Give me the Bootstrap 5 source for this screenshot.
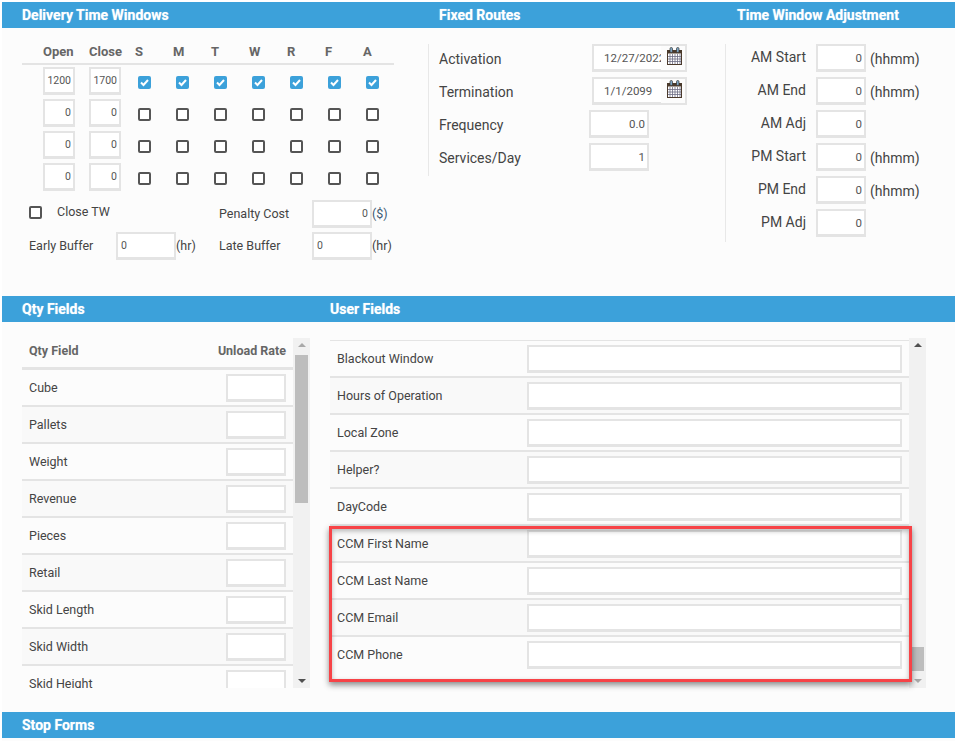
<!DOCTYPE html>
<html lang="en">
<head>
<meta charset="utf-8">
<title>Delivery settings</title>
<link href="https://cdn.jsdelivr.net/npm/bootstrap@5.3.0/dist/css/bootstrap.min.css" rel="stylesheet">
<style>
html,body{height:100%;}
body{background:#fff;font-family:Roboto,"Liberation Sans",sans-serif;font-size:12.5px;color:#444;overflow:hidden;}
.pg{margin:2px 0 0 2px;width:953px;height:739px;background:#fcfcfc;}
.band{height:26px;background:#3ca1da;color:#fff;font-weight:700;font-size:14px;line-height:26px;text-shadow:0 0 1px rgba(255,255,255,.6);}
.band-a{padding-left:20px;width:437px;}
.band-b{width:298px;}
.band-q{padding-left:20px;width:328px;}
.top{height:268px;}
.c-dtw{width:426px;padding:12px 0 0 20px;}
.tw-row{width:372px;height:32px;}
.tw-head{height:25px;border-bottom:2px solid #e4e4e4;font-weight:700;color:#666;font-size:13px;}
.form-control.o-c{margin-left:21px;width:32px;flex:none;}
.form-control.c-c{margin-left:14px;width:32px;flex:none;}
.tw-head .o-c{margin-left:21px;width:32px;flex:none;}
.tw-head .c-c{margin-left:14px;width:32px;flex:none;}
.d-c{width:38px;padding-left:3px;flex:none;}
.d-first{margin-left:14px;}
.d-c .form-check-input{margin-top:2px;}
.tw-head .d-c{padding-left:0;}
.form-check-input.ck{width:13px;height:13px;border:2px solid #555;border-radius:2px;background-color:#fff;box-shadow:none;display:block;}
.form-check-input.ck:checked{border:0;background-color:#3ca1da;background-size:100% 100%;background-image:url("data:image/svg+xml,%3csvg xmlns='http://www.w3.org/2000/svg' viewBox='0 0 13 13'%3e%3cpath fill='none' stroke='%23fff' stroke-width='2' d='M3 6.5l2.5 2.5 4.5-5'/%3e%3c/svg%3e");}
.form-control.fld{height:28px;min-height:0;padding:0 2px;border:2px solid #e4e4e4;border-bottom-width:3px;border-radius:0;background:#fff;font-size:10.5px;color:#555;text-align:right;box-shadow:none;}
.form-control.fld-l{text-align:left;padding-left:3px;}
.w50{width:50px;flex:none;}
.form-control.w60{width:60px;flex:none;}
.form-control.w375{width:375px;flex:none;}
.form-control.lg-t{font-size:11.5px;}
.tw-foot{padding-left:7px;width:372px;}
.ft1{height:28px;margin-top:7px;}
.ft2{height:28px;margin-top:4px;}
.lab-a{width:190px;padding-bottom:3px;}
.lab-a span{margin-left:15px;}
.lab-b{width:93px;}
.lab-c{width:87px;}
.lab-e{width:43px;}
.unit{color:#444;white-space:nowrap;}
.unit-d{color:#3d5a73;}
.c-fix{width:297px;margin-top:16px;height:132px;border-left:1px solid #e8e8e8;padding-left:10px;font-size:14px;}
.c-adj{margin-top:16px;height:198px;border-left:1px solid #e8e8e8;font-size:14px;}
.r33{height:28px;margin-bottom:5px;}
.r33:last-child{margin-bottom:0;}
.lab-f{width:150px;padding-top:2px;}
.lab-g{width:153px;padding-top:2px;}
.dt-grp{width:95px;flex:none;}
.dt-grp .form-control.fld{width:69px;flex:none;text-align:left;padding:0 0 0 10px;border-right:0;font-size:11.5px;}
.dt-add{width:26px;height:28px;flex:none;border:2px solid #e4e4e4;border-left:0;background:#fcfcfc;}
.lab-r{width:80px;text-align:right;margin-right:10px;padding-bottom:2px;}
.c-un{margin-left:4px;padding-top:2px;}
.bot{padding:16px 0 0 20px;height:390px;}
.view{height:350px;position:relative;}
.v-q{width:288px;}
.v-u{width:596px;margin-left:20px;}
.clip{height:350px;overflow:hidden;flex:1 1 auto;min-width:0;}
.trk{width:17px;height:350px;background:#f1f1f1;flex:none;padding:0 2px;}
.arr-u,.arr-d{width:0;height:0;border-left:4px solid transparent;border-right:4px solid transparent;margin:5px auto 0;}
.arr-u{border-bottom:4px solid #505050;}
.arr-d{border-top:4px solid #505050;margin:0 auto 5px;}
.arr-fade{border-bottom-color:#a9a9a9;}
.arr-fade-d{border-top-color:#a9a9a9;}
.thm{width:13px;background:#bdbdbd;}
.thm-q{height:148px;margin-top:8px;}
.thm-gap1{flex:1 1 auto;}
.thm-u{height:24px;margin-bottom:8px;}
.q-head{height:32px;border-bottom:3px solid #e4e4e4;padding:0 7px 2px;font-weight:700;color:#666;font-size:12.5px;}
.q-row{height:37px;border-bottom:2px solid #e4e4e4;padding:0 7px;flex:none;}
.q-row span{padding-top:2px;}
.q-list .q-row:nth-child(even){background:#f9f9f9;}
.u-list{margin-top:2px;border-top:1px solid #e4e4e4;}
.u-list .q-row:last-child{border-bottom-color:transparent;}
.red-box{position:absolute;left:-1px;top:188px;width:583px;height:156px;border:3px solid #f74347;box-shadow:0 3px 6px rgba(0,0,0,.45),inset 0 2px 5px rgba(0,0,0,.28);pointer-events:none;}
.cal{display:block;margin:1px 0 0 6px;}
</style>
</head>
<body>
<div class="pg">
  <div class="band d-flex"><div class="band-a">Delivery Time Windows</div><div class="band-b">Fixed Routes</div><div>Time Window Adjustment</div></div>
  <div class="top d-flex">
    <div class="c-dtw">
      <div class="tw-row tw-head d-flex align-items-center">
        <div class="o-c">Open</div><div class="c-c">Close</div>
        <div class="d-c d-first">S</div><div class="d-c">M</div><div class="d-c">T</div><div class="d-c">W</div><div class="d-c">R</div><div class="d-c">F</div><div class="d-c">A</div>
      </div>
      <div class="tw-row d-flex align-items-center">
        <input class="form-control fld o-c" value="1200"><input class="form-control fld c-c" value="1700">
        <div class="d-c d-first"><input type="checkbox" class="form-check-input ck" checked></div><div class="d-c"><input type="checkbox" class="form-check-input ck" checked></div><div class="d-c"><input type="checkbox" class="form-check-input ck" checked></div><div class="d-c"><input type="checkbox" class="form-check-input ck" checked></div><div class="d-c"><input type="checkbox" class="form-check-input ck" checked></div><div class="d-c"><input type="checkbox" class="form-check-input ck" checked></div><div class="d-c"><input type="checkbox" class="form-check-input ck" checked></div>
      </div>
      <div class="tw-row d-flex align-items-center">
        <input class="form-control fld o-c" value="0"><input class="form-control fld c-c" value="0">
        <div class="d-c d-first"><input type="checkbox" class="form-check-input ck"></div><div class="d-c"><input type="checkbox" class="form-check-input ck"></div><div class="d-c"><input type="checkbox" class="form-check-input ck"></div><div class="d-c"><input type="checkbox" class="form-check-input ck"></div><div class="d-c"><input type="checkbox" class="form-check-input ck"></div><div class="d-c"><input type="checkbox" class="form-check-input ck"></div><div class="d-c"><input type="checkbox" class="form-check-input ck"></div>
      </div>
      <div class="tw-row d-flex align-items-center">
        <input class="form-control fld o-c" value="0"><input class="form-control fld c-c" value="0">
        <div class="d-c d-first"><input type="checkbox" class="form-check-input ck"></div><div class="d-c"><input type="checkbox" class="form-check-input ck"></div><div class="d-c"><input type="checkbox" class="form-check-input ck"></div><div class="d-c"><input type="checkbox" class="form-check-input ck"></div><div class="d-c"><input type="checkbox" class="form-check-input ck"></div><div class="d-c"><input type="checkbox" class="form-check-input ck"></div><div class="d-c"><input type="checkbox" class="form-check-input ck"></div>
      </div>
      <div class="tw-row d-flex align-items-center">
        <input class="form-control fld o-c" value="0"><input class="form-control fld c-c" value="0">
        <div class="d-c d-first"><input type="checkbox" class="form-check-input ck"></div><div class="d-c"><input type="checkbox" class="form-check-input ck"></div><div class="d-c"><input type="checkbox" class="form-check-input ck"></div><div class="d-c"><input type="checkbox" class="form-check-input ck"></div><div class="d-c"><input type="checkbox" class="form-check-input ck"></div><div class="d-c"><input type="checkbox" class="form-check-input ck"></div><div class="d-c"><input type="checkbox" class="form-check-input ck"></div>
      </div>
      <div class="tw-foot ft1 d-flex align-items-center">
        <div class="lab-a d-flex align-items-center"><input type="checkbox" class="form-check-input ck m-0"><span>Close TW</span></div>
        <div class="lab-b">Penalty Cost</div><input class="form-control fld w60" value="0"><div class="unit unit-d">($)</div>
      </div>
      <div class="tw-foot ft2 d-flex align-items-center">
        <div class="lab-c">Early Buffer</div><input class="form-control fld fld-l w60" value="0"><div class="unit lab-e">(hr)</div>
        <div class="lab-b">Late Buffer</div><input class="form-control fld fld-l w60" value="0"><div class="unit">(hr)</div>
      </div>
    </div>
    <div class="c-fix">
      <div class="r33 d-flex align-items-center"><div class="lab-g">Activation</div>
        <div class="d-flex dt-grp"><input class="form-control fld" value="12/27/2022"><div class="dt-add">
          <svg class="cal" width="15" height="18" viewBox="0 0 15 18" aria-hidden="true"><rect x="0.5" y="3.5" width="14" height="14" fill="#fff" stroke="#4b3a2c"/><rect x="0.5" y="3.5" width="14" height="3" fill="#4b3a2c"/><path d="M3 7v10M5.5 7v10M8 7v10M10.5 7v10M13 7v10M1 9.5h13M1 12h13M1 14.5h13" stroke="#6c6c84" stroke-width=".8"/><rect x="3" y="0.5" width="2.5" height="5" rx="1.2" fill="#7fa8c8" stroke="#33302c" stroke-width=".7"/><rect x="9.5" y="0.5" width="2.5" height="5" rx="1.2" fill="#7fa8c8" stroke="#33302c" stroke-width=".7"/></svg>
        </div></div>
      </div>
      <div class="r33 d-flex align-items-center"><div class="lab-g">Termination</div>
        <div class="d-flex dt-grp"><input class="form-control fld" value="1/1/2099"><div class="dt-add">
          <svg class="cal" width="15" height="18" viewBox="0 0 15 18" aria-hidden="true"><rect x="0.5" y="3.5" width="14" height="14" fill="#fff" stroke="#4b3a2c"/><rect x="0.5" y="3.5" width="14" height="3" fill="#4b3a2c"/><path d="M3 7v10M5.5 7v10M8 7v10M10.5 7v10M13 7v10M1 9.5h13M1 12h13M1 14.5h13" stroke="#6c6c84" stroke-width=".8"/><rect x="3" y="0.5" width="2.5" height="5" rx="1.2" fill="#7fa8c8" stroke="#33302c" stroke-width=".7"/><rect x="9.5" y="0.5" width="2.5" height="5" rx="1.2" fill="#7fa8c8" stroke="#33302c" stroke-width=".7"/></svg>
        </div></div>
      </div>
      <div class="r33 d-flex align-items-center"><div class="lab-f">Frequency</div><input class="form-control fld lg-t w60" value="0.0"></div>
      <div class="r33 d-flex align-items-center"><div class="lab-f">Services/Day</div><input class="form-control fld lg-t w60" value="1"></div>
    </div>
    <div class="c-adj flex-grow-1">
      <div class="r33 d-flex align-items-center"><div class="lab-r">AM Start</div><input class="form-control fld lg-t w50" value="0"><div class="c-un">(hhmm)</div></div>
      <div class="r33 d-flex align-items-center"><div class="lab-r">AM End</div><input class="form-control fld lg-t w50" value="0"><div class="c-un">(hhmm)</div></div>
      <div class="r33 d-flex align-items-center"><div class="lab-r">AM Adj</div><input class="form-control fld lg-t w50" value="0"></div>
      <div class="r33 d-flex align-items-center"><div class="lab-r">PM Start</div><input class="form-control fld lg-t w50" value="0"><div class="c-un">(hhmm)</div></div>
      <div class="r33 d-flex align-items-center"><div class="lab-r">PM End</div><input class="form-control fld lg-t w50" value="0"><div class="c-un">(hhmm)</div></div>
      <div class="r33 d-flex align-items-center"><div class="lab-r">PM Adj</div><input class="form-control fld lg-t w50" value="0"></div>
    </div>
  </div>
  <div class="band d-flex"><div class="band-q">Qty Fields</div><div>User Fields</div></div>
  <div class="bot d-flex">
    <div class="view v-q d-flex">
      <div class="clip">
        <div class="q-head d-flex align-items-center justify-content-between"><span>Qty Field</span><span>Unload Rate</span></div>
        <div class="q-list">
          <div class="q-row d-flex align-items-center justify-content-between"><span>Cube</span><input class="form-control fld w60"></div>
          <div class="q-row d-flex align-items-center justify-content-between"><span>Pallets</span><input class="form-control fld w60"></div>
          <div class="q-row d-flex align-items-center justify-content-between"><span>Weight</span><input class="form-control fld w60"></div>
          <div class="q-row d-flex align-items-center justify-content-between"><span>Revenue</span><input class="form-control fld w60"></div>
          <div class="q-row d-flex align-items-center justify-content-between"><span>Pieces</span><input class="form-control fld w60"></div>
          <div class="q-row d-flex align-items-center justify-content-between"><span>Retail</span><input class="form-control fld w60"></div>
          <div class="q-row d-flex align-items-center justify-content-between"><span>Skid Length</span><input class="form-control fld w60"></div>
          <div class="q-row d-flex align-items-center justify-content-between"><span>Skid Width</span><input class="form-control fld w60"></div>
          <div class="q-row d-flex align-items-center justify-content-between"><span>Skid Height</span><input class="form-control fld w60"></div>
        </div>
      </div>
      <div class="trk d-flex flex-column"><div class="arr-u arr-fade"></div><div class="thm thm-q"></div><div class="thm-gap1"></div><div class="arr-d"></div></div>
    </div>
    <div class="view v-u d-flex">
      <div class="clip">
        <div class="q-list u-list">
          <div class="q-row d-flex align-items-center justify-content-between"><span>Blackout Window</span><input class="form-control fld w375"></div>
          <div class="q-row d-flex align-items-center justify-content-between"><span>Hours of Operation</span><input class="form-control fld w375"></div>
          <div class="q-row d-flex align-items-center justify-content-between"><span>Local Zone</span><input class="form-control fld w375"></div>
          <div class="q-row d-flex align-items-center justify-content-between"><span>Helper?</span><input class="form-control fld w375"></div>
          <div class="q-row d-flex align-items-center justify-content-between"><span>DayCode</span><input class="form-control fld w375"></div>
          <div class="q-row d-flex align-items-center justify-content-between"><span>CCM First Name</span><input class="form-control fld w375"></div>
          <div class="q-row d-flex align-items-center justify-content-between"><span>CCM Last Name</span><input class="form-control fld w375"></div>
          <div class="q-row d-flex align-items-center justify-content-between"><span>CCM Email</span><input class="form-control fld w375"></div>
          <div class="q-row d-flex align-items-center justify-content-between"><span>CCM Phone</span><input class="form-control fld w375"></div>
        </div>
      </div>
      <div class="trk d-flex flex-column"><div class="arr-u"></div><div class="thm-gap1"></div><div class="thm thm-u"></div><div class="arr-d arr-fade-d"></div></div>
      <div class="red-box"></div>
    </div>
  </div>
  <div class="band d-flex"><div class="band-a">Stop Forms</div></div>
</div>
</body>
</html>
